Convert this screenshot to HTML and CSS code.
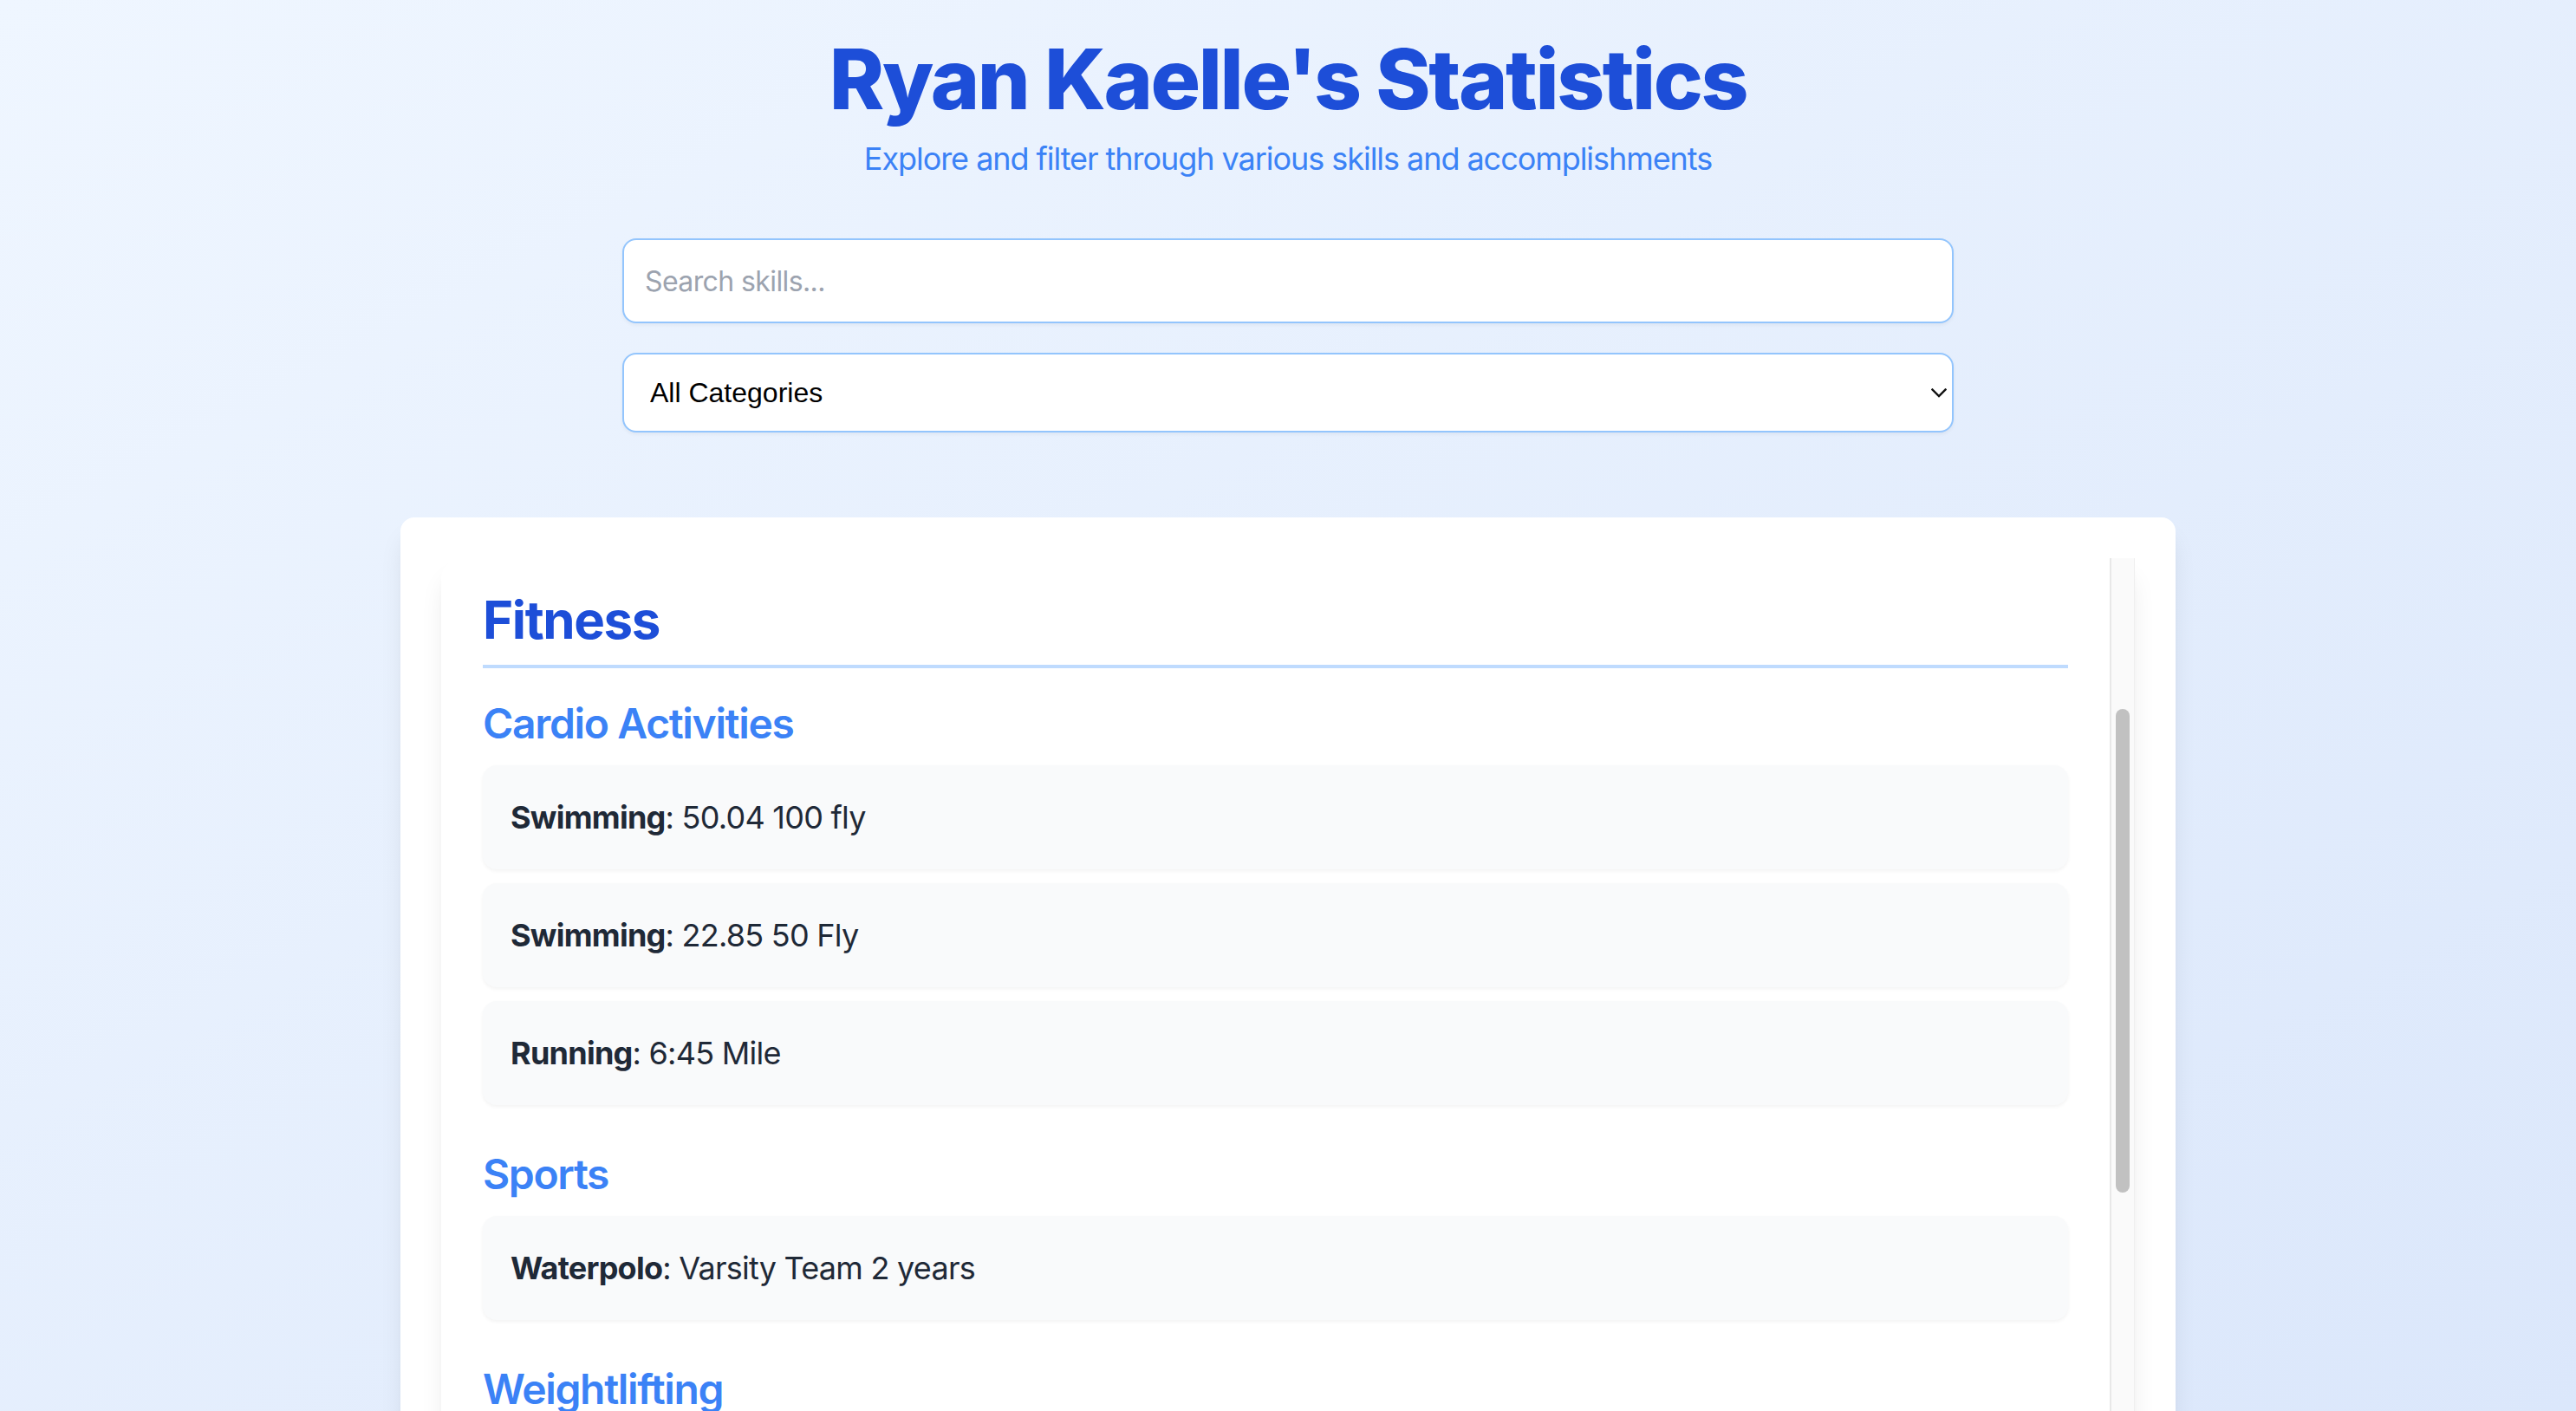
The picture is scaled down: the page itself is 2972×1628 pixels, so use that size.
FILE: index.html
```html
<!DOCTYPE html>
<html lang="en">
<head>
<meta charset="utf-8">
<title>Ryan Kaelle's Statistics</title>
<link rel="stylesheet" href="styles.css">
</head>
<body>
<div class="page">
  <header class="hero">
    <h1 class="title">Ryan Kaelle's Statistics</h1>
    <p class="subtitle">Explore and filter through various skills and accomplishments</p>
  </header>

  <div class="filters">
    <input class="search" type="text" placeholder="Search skills...">
    <div class="select-wrap">
      <select class="category">
        <option>All Categories</option>
        <option>Fitness</option>
      </select>
      <svg class="chevron" width="18" height="11" viewBox="0 0 18 11" aria-hidden="true">
        <path d="M1.5 1.5 L9 9 L16.5 1.5" fill="none" stroke="#111" stroke-width="2.4" stroke-linecap="square" stroke-linejoin="miter"/>
      </svg>
    </div>
  </div>

  <main class="card">
    <div class="panel">
      <div class="panel-content">
        <section class="category-section">
          <h2 class="category-title">Fitness</h2>

          <div class="group">
            <h3 class="group-title">Cardio Activities</h3>
            <ul class="items">
              <li class="item"><strong>Swimming</strong>: 50.04 100 fly</li>
              <li class="item"><strong>Swimming</strong>: 22.85 50 Fly</li>
              <li class="item"><strong>Running</strong>: 6:45 Mile</li>
            </ul>
          </div>

          <div class="group">
            <h3 class="group-title">Sports</h3>
            <ul class="items">
              <li class="item"><strong>Waterpolo</strong>: Varsity Team 2 years</li>
            </ul>
          </div>

          <div class="group">
            <h3 class="group-title">Weightlifting</h3>
            <ul class="items">
              <li class="item"><strong>Bench Press</strong>: 225 lbs</li>
            </ul>
          </div>
        </section>
      </div>
      <div class="scrollbar"><div class="thumb"></div></div>
    </div>
  </main>
</div>
</body>
</html>
```

FILE: styles.css
```css
html, body {
  margin: 0;
  height: 100%;
  overflow: hidden;
}

body {
  background: linear-gradient(to bottom right, #eff6ff, #dbe7fb);
  font-family: Inter, "Noto Sans", sans-serif;
  color: #1f2937;
}

.page {
  padding-top: 43px;
}

.hero {
  text-align: center;
}

.title {
  margin: 0 0 16px;
  font-size: 96px;
  line-height: 1;
  font-weight: 800;
  letter-spacing: -2.4px;
  color: #1d4ed8;
}

.subtitle {
  margin: 0 0 64px;
  font-size: 36px;
  line-height: 56px;
  letter-spacing: -1.05px;
  color: #3b82f6;
}

.filters {
  width: 1536px;
  margin: 0 auto 98px;
  display: flex;
  flex-direction: column;
  gap: 34px;
}

.search {
  display: block;
  width: 100%;
  height: 98px;
  box-sizing: border-box;
  border: 2px solid #93c5fd;
  border-radius: 16px;
  padding: 0 24px;
  font-family: Inter, "Noto Sans", sans-serif;
  font-size: 32px;
  letter-spacing: -0.6px;
  color: #1f2937;
  background: #fff;
  box-shadow: 0 2px 4px rgba(0, 0, 0, 0.05);
  outline: none;
}

.search::placeholder {
  color: #9ca3af;
}

.select-wrap {
  position: relative;
}

.category {
  display: block;
  width: 100%;
  height: 92px;
  box-sizing: border-box;
  appearance: none;
  -webkit-appearance: none;
  border: 2px solid #93c5fd;
  border-radius: 16px;
  padding: 0 30px;
  font-family: "Liberation Sans", Arial, sans-serif;
  font-size: 32px;
  color: #000;
  background: #fff;
  box-shadow: 0 2px 4px rgba(0, 0, 0, 0.05);
  outline: none;
}

.chevron {
  position: absolute;
  right: 8px;
  top: 41px;
  pointer-events: none;
}

.card {
  width: 2048px;
  box-sizing: border-box;
  margin: 0 auto;
  padding: 47px 47px 0;
  background: #fff;
  border-radius: 16px;
  box-shadow: 0 20px 30px -6px rgba(0, 0, 0, 0.1), 0 8px 12px -8px rgba(0, 0, 0, 0.1);
}

.panel {
  display: flex;
  background: #fff;
  border-radius: 24px 0 0 0;
  box-shadow: 0 20px 30px -6px rgba(0, 0, 0, 0.1), 0 8px 12px -8px rgba(0, 0, 0, 0.1);
}

.panel-content {
  flex: 1;
  min-width: 0;
  padding: 35px 48px 48px;
}

.category-title {
  margin: 0 0 32px;
  padding-bottom: 16px;
  border-bottom: 4px solid #bfdbfe;
  font-size: 60px;
  line-height: 72px;
  font-weight: 700;
  letter-spacing: -1.4px;
  color: #1d4ed8;
}

.group {
  margin-bottom: 48px;
}

.group-title {
  margin: 0 0 16px;
  font-size: 48px;
  line-height: 64px;
  font-weight: 600;
  letter-spacing: -1.35px;
  color: #3b82f6;
}

.items {
  list-style: none;
  margin: 0;
  padding: 0;
  display: flex;
  flex-direction: column;
  gap: 16px;
}

.item {
  background: #f9fafb;
  border-radius: 16px;
  padding: 32px;
  font-size: 36px;
  line-height: 56px;
  letter-spacing: -0.75px;
  color: #1f2937;
  box-shadow: 0 2px 4px rgba(0, 0, 0, 0.05);
}

.item strong {
  font-weight: 700;
}

.scrollbar {
  flex: none;
  width: 29px;
  box-sizing: border-box;
  background: #fafafa;
  border-left: 2px solid #e8e8e8;
  border-right: 1px solid #efefef;
}

.thumb {
  width: 16px;
  height: 558px;
  margin: 174px 0 0 5px;
  border-radius: 8px;
  background: #c1c1c1;
}
```
